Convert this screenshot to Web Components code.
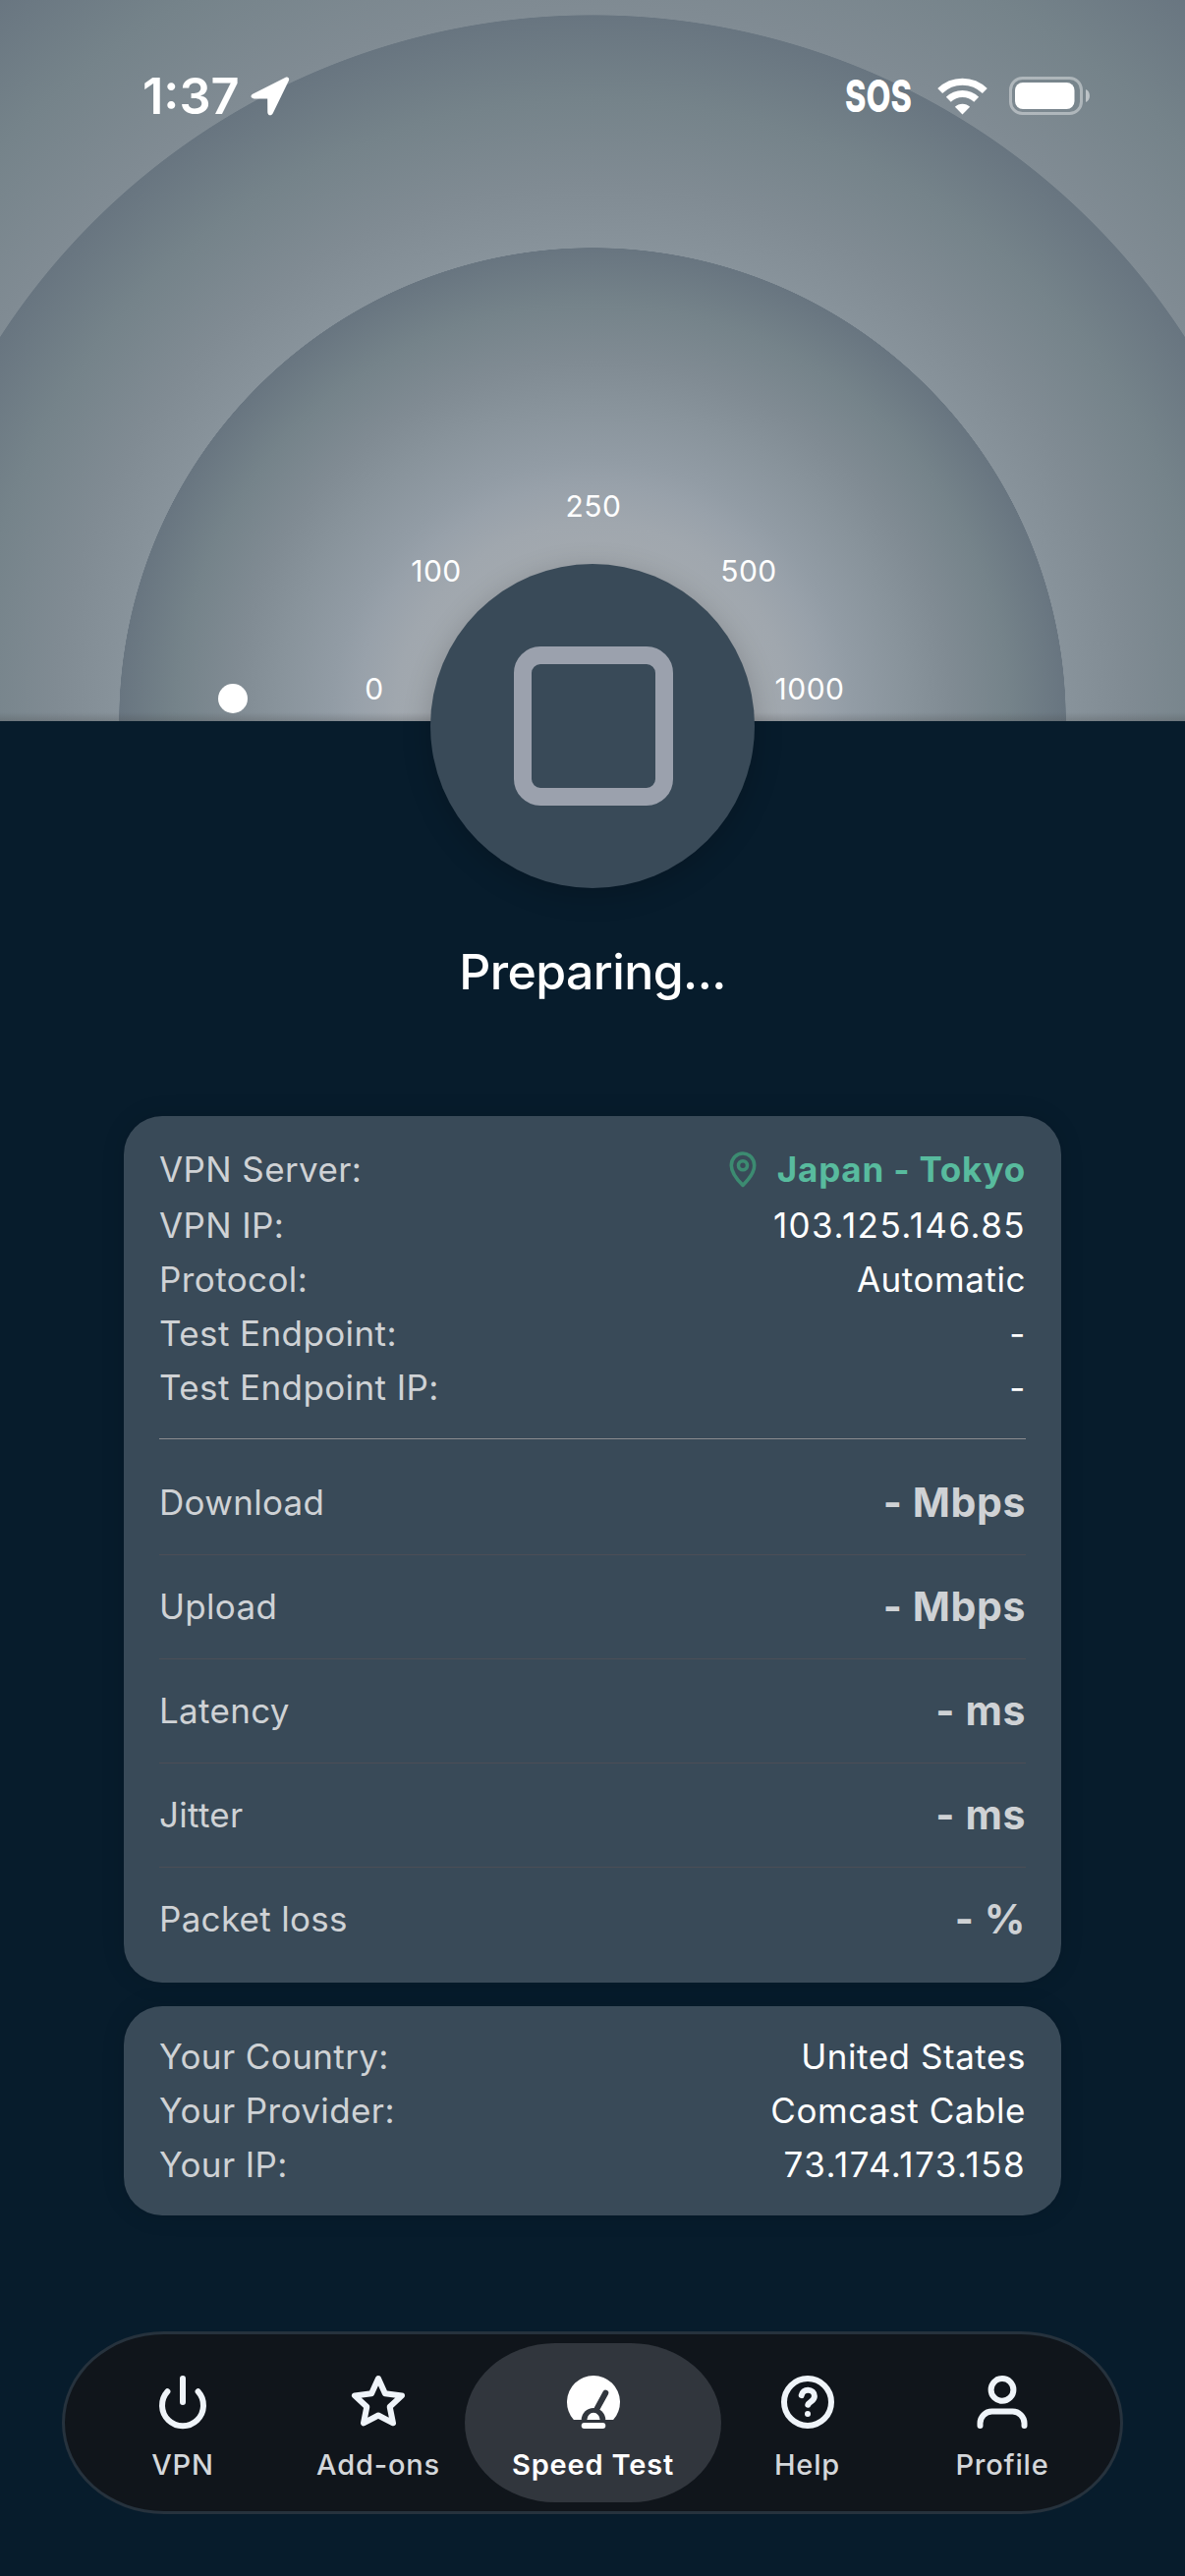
<!DOCTYPE html>
<html lang="en">
<head>
<meta charset="utf-8">
<title>Speed Test</title>
<style>
    body {
        margin: 0;
        background: #071c2c;
        font-family: Inter, "Liberation Sans", sans-serif;
        color: #fff;
    }
</style>
</head>
<body>

<speed-screen>
    <speed-dial slot="dial">
        <status-bar time="1:37" carrier="SOS"></status-bar>
    </speed-dial>
    <span slot="state">Preparing...</span>

    <info-card>
        <info-row label="VPN Server:" kind="server">Japan - Tokyo</info-row>
        <info-row label="VPN IP:" kind="address">103.125.146.85</info-row>
        <info-row label="Protocol:">Automatic</info-row>
        <info-row label="Test Endpoint:">-</info-row>
        <info-row label="Test Endpoint IP:">-</info-row>
        <result-list slot="results">
            <result-row label="Download">- Mbps</result-row>
            <result-row label="Upload">- Mbps</result-row>
            <result-row label="Latency">- ms</result-row>
            <result-row label="Jitter">- ms</result-row>
            <result-row label="Packet loss">- %</result-row>
        </result-list>
    </info-card>

    <info-card>
        <info-row label="Your Country:">United States</info-row>
        <info-row label="Your Provider:">Comcast Cable</info-row>
        <info-row label="Your IP:" kind="address">73.174.173.158</info-row>
    </info-card>

    <tab-bar slot="tabs">
        <tab-item icon="power">VPN</tab-item>
        <tab-item icon="star">Add-ons</tab-item>
        <tab-item icon="gauge" active>Speed Test</tab-item>
        <tab-item icon="help">Help</tab-item>
        <tab-item icon="person">Profile</tab-item>
    </tab-bar>
</speed-screen>

<script>
// shared by all elements: open a shadow root and fill it
class BaseElement extends HTMLElement {
    constructor() {
        super();
        this.attachShadow({mode: 'open'});
        this.shadowRoot.innerHTML = this.render();
    }
    render() { return ''; }
}

class SpeedScreen extends BaseElement {
    render() {
        return `
        <style>
            :host {
                display: flex;
                flex-direction: column;
                width: 1206px;
                height: 2622px;
                overflow: hidden;
                background: #071c2c;
            }
            .state {
                margin: 225px 0 117px;
                text-align: center;
                font-size: 50px;
                line-height: 60px;
                font-weight: 500;
                letter-spacing: -0.6px;
            }
            .cards {
                display: flex;
                flex-direction: column;
                gap: 24px;
                padding: 0 126px;
            }
            .tabs {
                margin: 118px 63px 0;
            }
        </style>
        <slot name="dial"></slot>
        <div class="state"><slot name="state"></slot></div>
        <div class="cards"><slot></slot></div>
        <div class="tabs"><slot name="tabs"></slot></div>`;
    }
}

class StatusBar extends BaseElement {
    render() {
        return `
        <style>
            :host {
                display: flex;
                justify-content: space-between;
                align-items: center;
                height: 60px;
                padding: 68px 97px 0 145px;
            }
            .side {
                display: flex;
                align-items: center;
            }
            .time {
                width: 110px;
                font-size: 50.500px;
                line-height: 60px;
                font-weight: 600;
                letter-spacing: 0;
            }
            .carrier {
                width: 94px;
                font-size: 45px;
                line-height: 60px;
                font-weight: 800;
                transform: scaleX(0.72);
                transform-origin: left center;
            }
            svg { display: block; }
            .wifi { margin-right: 22px; }
        </style>
        <div class="side">
            <span class="time">${this.getAttribute('time')}</span>
            <svg width="40" height="40" viewBox="0 0 40 40">
                <path fill="#fff" d="M36.2 .6 2.600 17.400C-.8 19.200 .2 22.400 3.600 22.400L17.200 22.500 17.300 36.200C17.400 39.900 21.400 40.400 22.900 37L38.800 4.200C39.900 1.700 38.200-.3 36.200.6Z"/>
            </svg>
        </div>
        <div class="side">
            <span class="carrier">${this.getAttribute('carrier')}</span>
            <svg class="wifi" width="51" height="38" viewBox="0 0 51 38">
                <g fill="none" stroke="#fff" stroke-width="7">
                    <path d="M2.700 13.500a32.500 32.500 0 0 1 45.600 0"/>
                    <path d="M11.300 22.300a20.300 20.300 0 0 1 28.400 0"/>
                </g>
                <path fill="#fff" d="M25.500 37.500 17.900 29.800a10.800 10.800 0 0 1 15.200 0Z"/>
            </svg>
            <svg width="82" height="40" viewBox="0 0 82 40">
                <rect x="1.500" y="1.500" width="72" height="36" rx="12" fill="none" stroke="#fff" stroke-opacity=".4" stroke-width="3"/>
                <rect x="6" y="6" width="60.500" height="27" rx="8" fill="#fff"/>
                <path d="M78 13c5.300 1.500 5.300 11.500 0 13Z" fill="#fff" fill-opacity=".5"/>
            </svg>
        </div>`;
    }
}

class SpeedDial extends BaseElement {
    render() {
        return `
        <style>
            :host {
                display: block;
                position: relative;
                height: 734px;
                flex: none;
                /* one ramp, repeated for each of the three rings */
                --ramp: #a3a9af 34%, #a0a7ae 42%, #98a1aa 50%, #929ca5 55%, #88939b 67%, #808b93 76%, #75838a 88%, #687580;
                background:
                    radial-gradient(circle 482px at 50% 100%, var(--ramp) 99.9%, transparent 100%),
                    radial-gradient(circle 719px at 50% 100%, var(--ramp) 99.9%, transparent 100%),
                    radial-gradient(circle 956px at 50% 100%, var(--ramp) 100%);
            }
            .edge {
                position: absolute;
                left: 0;
                right: 0;
                bottom: 0;
                height: 9px;
                background: linear-gradient(transparent, rgba(60, 60, 60, .22));
            }
            .mark {
                position: absolute;
                transform: translate(-50%, -50%);
                font-size: 30px;
                line-height: 36px;
                letter-spacing: 0.5px;
            }
            .needle {
                position: absolute;
                left: 222px;
                top: 696px;
                width: 30px;
                height: 30px;
                border-radius: 50%;
                background: #fff;
            }
            .knob {
                position: absolute;
                left: 438px;
                top: 574px;
                box-sizing: border-box;
                width: 330px;
                height: 330px;
                padding-left: 2px;
                border-radius: 50%;
                background: #394a58;
                box-shadow: 0 6px 30px rgba(0, 0, 0, .2);
                display: flex;
                align-items: center;
                justify-content: center;
            }
            .stop {
                box-sizing: border-box;
                width: 162px;
                height: 162px;
                border: 18px solid #9ba1ad;
                border-radius: 27px;
            }
        </style>
        <slot></slot>
        <div class="edge"></div>
        <span class="mark" style="left:381px;top:701px">0</span>
        <span class="mark" style="left:444px;top:581px">100</span>
        <span class="mark" style="left:604px;top:515px">250</span>
        <span class="mark" style="left:762px;top:581px">500</span>
        <span class="mark" style="left:824px;top:701px">1000</span>
        <div class="needle"></div>
        <div class="knob"><div class="stop"></div></div>`;
    }
}

class InfoCard extends BaseElement {
    render() {
        return `
        <style>
            :host {
                display: block;
                padding: 24px 36px;
                border-radius: 39px;
                background: #394a58;
                box-shadow: 0 0 24px rgba(0, 0, 0, .12);
            }
            :host(:first-of-type) { padding-bottom: 12px; }
        </style>
        <slot></slot>
        <slot name="results"></slot>`;
    }
}

class InfoRow extends BaseElement {
    render() {
        const server = this.getAttribute('kind') === 'server';
        const pin = `
            <svg width="30" height="38" viewBox="0 0 30 38" fill="none" stroke="#3c8b71" stroke-width="3.600">
                <path stroke-linejoin="round" d="M15 35.400C11.500 32 3.300 24 3.300 15.200a11.700 12.200 0 0 1 23.400 0C26.700 24 18.500 32 15 35.400Z"/>
                <circle cx="15" cy="15.200" r="4.500"/>
            </svg>`;
        return `
        <style>
            :host {
                display: flex;
                justify-content: space-between;
                align-items: center;
                height: 55px;
                font-size: 35px;
                line-height: 55px;
                letter-spacing: 0.400px;
            }
            :host([kind="server"]) { height: 60px; }
            .label { color: #cfd2d5; }
            .value {
                display: flex;
                align-items: center;
                gap: 20px;
                letter-spacing: 0.550px;
            }
            :host([kind="server"]) .value {
                color: #58bb9e;
                font-weight: 700;
                letter-spacing: 0.800px;
            }
            :host([kind="address"]) .value { letter-spacing: 1.450px; }
        </style>
        <span class="label">${this.getAttribute('label')}</span>
        <span class="value">${server ? pin : ''}<slot></slot></span>`;
    }
}

class ResultList extends BaseElement {
    render() {
        return `
        <style>
            :host {
                display: block;
                margin-top: 24px;
                padding-top: 12px;
                border-top: 1px solid #8b8c90;
            }
            ::slotted(:not(:last-child)) { border-bottom: 1px solid #4c4e56; }
        </style>
        <slot></slot>`;
    }
}

class ResultRow extends BaseElement {
    render() {
        return `
        <style>
            :host {
                display: flex;
                justify-content: space-between;
                align-items: center;
                height: 103px;
                padding-bottom: 2px;
                color: #cfd2d5;
                font-size: 35px;
                letter-spacing: 0.300px;
            }
            b {
                font-size: 41px;
                font-weight: 700;
                letter-spacing: 0.600px;
            }
        </style>
        <span>${this.getAttribute('label')}</span>
        <b><slot></slot></b>`;
    }
}

class TabBar extends BaseElement {
    render() {
        return `
        <style>
            :host {
                display: grid;
                grid-template-columns: 222px 176px 261px 175px 222px;
                box-sizing: border-box;
                height: 186px;
                padding: 9px;
                border: 3px solid #26323d;
                border-radius: 104px / 93px;
                background: #10151b;
            }
        </style>
        <slot></slot>`;
    }
}

const icons = {
    power: `<path d="M12 4v8M6.800 8.400a7 7 0 1 0 10.400 0"/>`,
    star: `<path d="M12 4 14.300 9.100 20 9.800 15.900 13.600 17 19.100 12 16.500 7 19.100 8.100 13.600 4 9.800 9.700 9.100Z"/>`,
    help: `<circle cx="12" cy="12" r="8"/>
        <path d="M9.900 9.700C10.100 8.600 11 7.900 12.100 7.900c1.200 0 2.200.9 2.200 2.100 0 1.700-1.800 1.800-2.200 2.900"/>
        <circle cx="12" cy="16" r="1" fill="currentColor" stroke="none"/>`,
    person: `<circle cx="12" cy="7.800" r="3.800"/>
        <path d="M4.500 20v-.8a4 4 0 0 1 4-4h7a4 4 0 0 1 4 4v.8"/>`,
    gauge: `<path fill="currentColor" stroke="none" d="M5.300 18A9 9 0 1 1 18.700 18Z"/>
        <path stroke="#31363d" d="M13.200 14.200 16.100 8.900"/>
        <path fill="#31363d" stroke="none" d="M7.900 18.100a4.100 4.100 0 0 1 8.200 0Z"/>
        <path fill="currentColor" stroke="none" d="M9.800 18a2.200 2.400 0 0 1 4.400 0Z"/>
        <path d="M8.900 20h6.200"/>`
};

class TabItem extends BaseElement {
    render() {
        return `
        <style>
            :host {
                display: flex;
                flex-direction: column;
                align-items: center;
                height: 162px;
                border-radius: 92px / 81px;
                color: #d4d7da;
                font-size: 29px;
                line-height: 36px;
                font-weight: 500;
                letter-spacing: 0.800px;
            }
            :host([active]) {
                background: #31363d;
                color: #fff;
                font-weight: 600;
            }
            svg {
                margin: 24px 0 6px;
                color: #eff4f9;
            }
            :host([active]) svg { color: #fff; }
            span { margin-top: 4px; }
        </style>
        <svg width="72" height="72" viewBox="0 0 24 24" fill="none" stroke="currentColor"
            stroke-width="2" stroke-linecap="round" stroke-linejoin="round">${icons[this.getAttribute('icon')]}</svg>
        <span><slot></slot></span>`;
    }
}

customElements.define('status-bar', StatusBar);
customElements.define('speed-dial', SpeedDial);
customElements.define('info-row', InfoRow);
customElements.define('result-row', ResultRow);
customElements.define('result-list', ResultList);
customElements.define('info-card', InfoCard);
customElements.define('tab-item', TabItem);
customElements.define('tab-bar', TabBar);
customElements.define('speed-screen', SpeedScreen);
</script>
</body>
</html>
